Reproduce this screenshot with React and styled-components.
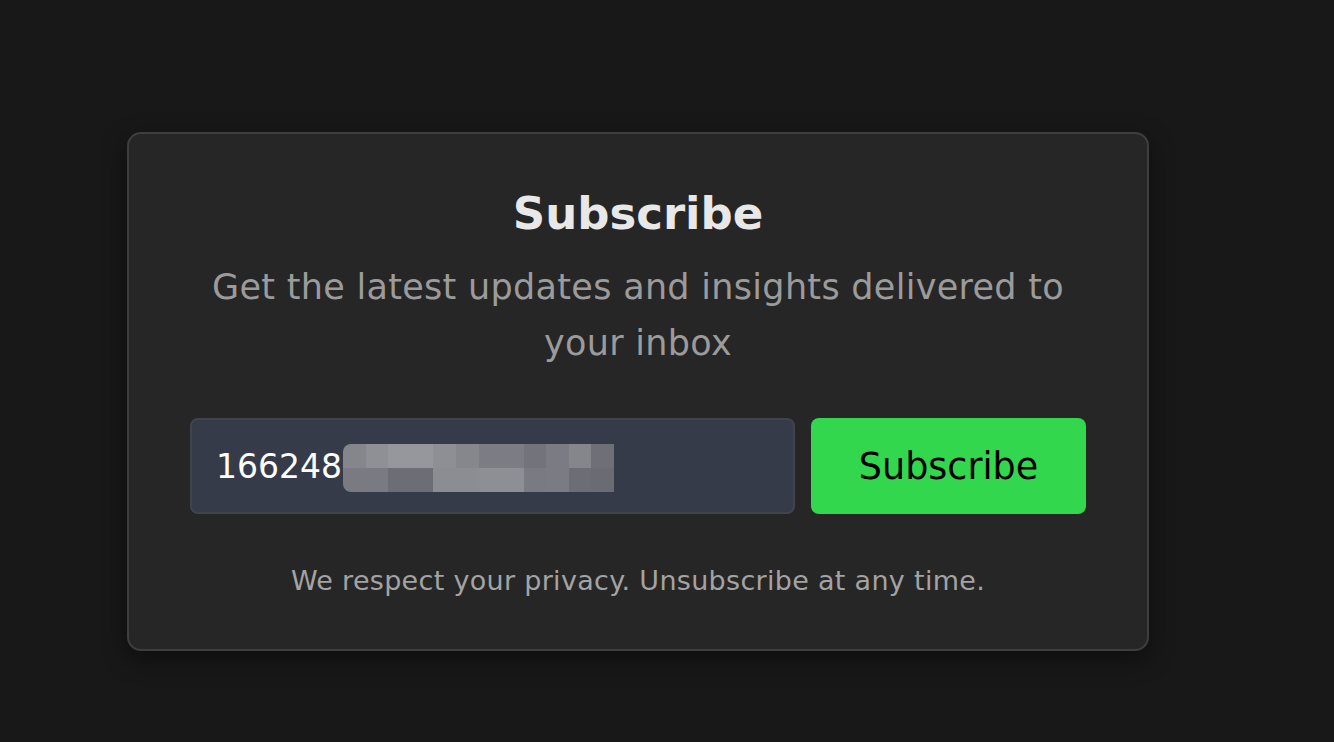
import React from "react";
import styled, { createGlobalStyle } from "styled-components";

const Global = createGlobalStyle`
  html, body { margin: 0; padding: 0; background: #181818; }
  body { font-family: "DejaVu Sans", "Open Sans", sans-serif; }
  * { box-sizing: border-box; }
`;

const Page = styled.div`
  min-height: 742px;
  padding: 132px 0 0 127px;
`;

const Card = styled.section`
  width: 1022px;
  background: #262626;
  border: 2px solid #3e3e3e;
  border-radius: 14px;
  box-shadow: 0 8px 26px rgba(0, 0, 0, 0.45);
  padding: 48px 63px 48px;
  display: flex;
  flex-direction: column;
  align-items: center;
`;

const Title = styled.h2`
  margin: 0;
  font-size: 45px;
  line-height: 64px;
  font-weight: 700;
  color: #e8e8e8;
`;

const Subtitle = styled.p`
  margin: 13px 0 0;
  font-size: 35px;
  letter-spacing: 0.3px;
  line-height: 56px;
  color: #9b9b9b;
  text-align: center;
  max-width: 880px;
`;

const Form = styled.form`
  margin-top: 47px;
  width: 896px;
  display: flex;
  gap: 16px;
`;

const Field = styled.div`
  position: relative;
  width: 605px;
  height: 96px;
`;

const Input = styled.input`
  width: 100%;
  height: 100%;
  background: #353b49;
  border: 2px solid #40444e;
  border-radius: 8px;
  padding: 0 24px;
  font-family: inherit;
  font-size: 33px;
  color: #ffffff;
  outline: none;
`;

const Mosaic = styled.div`
  position: absolute;
  left: 153px;
  top: 26px;
  width: 271px;
  height: 48px;
  display: grid;
  grid-template-columns: repeat(12, 1fr);
  grid-template-rows: repeat(2, 1fr);
  border-radius: 8px 0 0 8px;
  overflow: hidden;
`;

const Tile = styled.span`
  background: ${(p) => p.$c};
`;

const Button = styled.button`
  width: 275px;
  height: 96px;
  border: none;
  border-radius: 8px;
  background: #33d74d;
  color: #000;
  font-family: inherit;
  font-size: 36.5px;
  cursor: pointer;
`;

const Note = styled.p`
  margin: 47px 0 0;
  font-size: 27px;
  letter-spacing: 0.3px;
  line-height: 40px;
  color: #a3a3a3;
`;

const tiles = [
  "#85868c", "#8f9096", "#96979c", "#96979c", "#8e8f95", "#86878d", "#7c7d84", "#7c7d84", "#72737b", "#7b7c83", "#85868c", "#6e6f77",
  "#7a7b82", "#7a7b82", "#6c6d75", "#6c6d75", "#8c8d93", "#8c8d93", "#8e8f95", "#8e8f95", "#7a7b82", "#7b7c83", "#6c6d75", "#6a6b73",
];

export default function App() {
  return (
    <>
      <Global />
      <Page>
        <Card>
          <Title>Subscribe</Title>
          <Subtitle>Get the latest updates and insights delivered to your inbox</Subtitle>
          <Form onSubmit={(e) => e.preventDefault()}>
            <Field>
              <Input type="text" value="166248" readOnly />
              <Mosaic>
                {tiles.map((c, i) => (
                  <Tile key={i} $c={c} />
                ))}
              </Mosaic>
            </Field>
            <Button type="submit">Subscribe</Button>
          </Form>
          <Note>We respect your privacy. Unsubscribe at any time.</Note>
        </Card>
      </Page>
    </>
  );
}
